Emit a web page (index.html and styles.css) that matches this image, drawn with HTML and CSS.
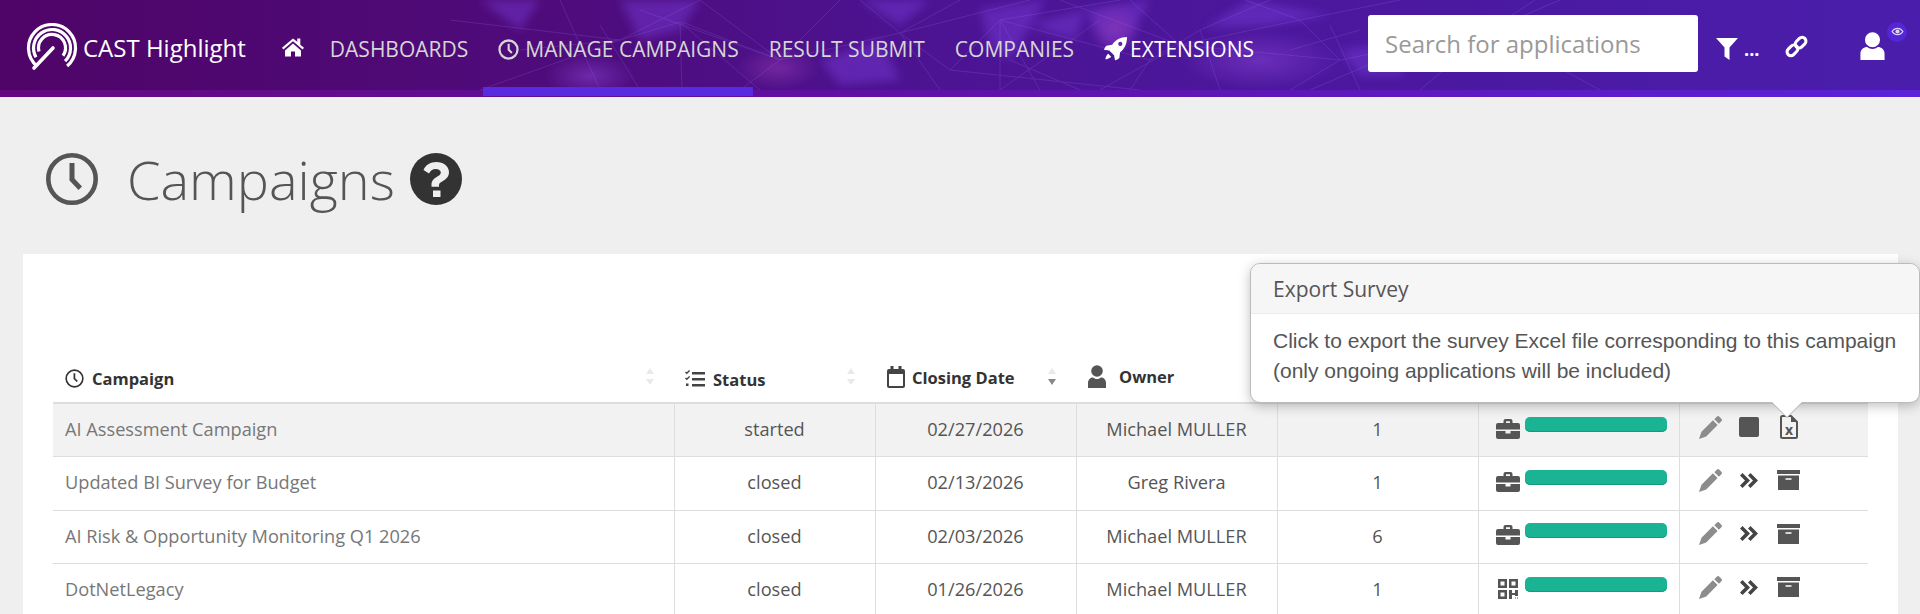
FILE: index.html
```html
<!DOCTYPE html>
<html lang="en">
<head>
<meta charset="utf-8">
<title>Campaigns</title>
<link rel="stylesheet" href="styles.css">
</head>
<body>
<svg class="defs" width="0" height="0" aria-hidden="true">
  <symbol id="case" viewBox="0 0 24 20"><path d="M7.500 4V2a2 2 0 0 1 2-2h5a2 2 0 0 1 2 2v2H22a2 2 0 0 1 2 2v4.500H0V6a2 2 0 0 1 2-2zm2.500 0h4V2.300h-4zM0 12h9.500v2.500h5V12H24v6a2 2 0 0 1-2 2H2a2 2 0 0 1-2-2z" fill="#555"/></symbol>
  <symbol id="qr" viewBox="0 0 24 20"><path fill="#555" fill-rule="evenodd" d="M2 0h9v9H2zM4.500 2.500v4h4v-4zM13 0h9v9h-9zM15.500 2.500v4h4v-4zM2 11h9v9H2zM4.500 13.500v4h4v-4zM13 11h3v3h3v-3h3v6h-3v-1h-3v4h-3zM19 18.500h1v1h-1zM21 18.500h1v1h-1z"/></symbol>
  <symbol id="pen" viewBox="0 0 24 24"><path fill="#8c8c8c" fill-rule="evenodd" d="M18.500.8a2 2 0 0 1 2.800 0l2 2a2 2 0 0 1 0 2.800l-2.500 2.500-4.800-4.800zM14.500 4.500l4.900 4.900L7.500 21.300 0 24l2.600-7.600z"/></symbol>
  <symbol id="next" viewBox="0 0 18 15"><path fill="#444" d="M0 2.500L2.500 0l7.500 7.500-7.500 7.500L0 12.500l5-5zM8 2.500L10.500 0 18 7.500 10.500 15 8 12.500l5-5z"/></symbol>
  <symbol id="box" viewBox="0 0 23 20"><path fill="#555" fill-rule="evenodd" d="M0 0h23v4H0zM1 5.500h21V20H1zM8.500 8.200v1.600h6V8.200z"/></symbol>
</svg>
<header class="topbar">
  <svg class="net" viewBox="0 0 1920 90" preserveAspectRatio="none" aria-hidden="true">
    <defs>
      <filter id="soft" x="-20%" y="-20%" width="140%" height="140%"><feGaussianBlur stdDeviation="5"/></filter>
      <radialGradient id="g1"><stop offset="0" stop-color="#8a45d8" stop-opacity=".5"/><stop offset="1" stop-color="#8a45d8" stop-opacity="0"/></radialGradient>
      <radialGradient id="g2"><stop offset="0" stop-color="#a040b8" stop-opacity=".45"/><stop offset="1" stop-color="#a040b8" stop-opacity="0"/></radialGradient>
    </defs>
    <g class="blobs" filter="url(#soft)">
      <polygon points="1085,10 1150,0 1125,45 1105,45"/>
      <polygon points="1205,28 1250,0 1330,15 1270,25"/>
      <polygon points="980,10 1045,0 1010,60 990,45"/>
      <polygon points="1340,50 1420,40 1400,75 1360,75"/>
      <polygon points="860,0 930,0 900,25"/>
      <polygon points="1030,25 1085,10 1075,40"/>
      <polygon points="620,0 700,0 680,30 640,40"/>
      <polygon points="480,0 540,0 520,30"/>
      <polygon points="820,60 880,40 900,80 840,85"/>
    </g>
    <ellipse cx="778" cy="68" rx="42" ry="22" fill="url(#g2)"/>
    <ellipse cx="590" cy="76" rx="45" ry="22" fill="url(#g1)"/>
    <ellipse cx="1115" cy="28" rx="28" ry="26" fill="url(#g2)"/>
    <ellipse cx="1260" cy="60" rx="80" ry="30" fill="url(#g1)"/>
    <g class="net-lines">
      <path d="M560 0L600 90M480 90L620 40L700 0M620 40L680 22L760 90M680 22L682 90M682 22L780 60M600 25L640 90"/>
      <path d="M780 60L900 33L1030 0M780 60L740 90M900 33L940 90M900 33L950 70L1000 20L1040 90M950 70L1140 90M640 10L780 60"/>
      <path d="M1000 20L1000 90M1000 20L1120 0M1000 20L1150 60L1200 30L1270 0M1150 60L1130 90M1200 30L1220 90M1000 90L1100 20"/>
      <path d="M1130 0L1180 45L1300 20L1340 60L1290 90M1300 20L1400 0M1340 60L1490 30M1490 30L1420 90M1490 30L1535 0"/>
      <path d="M1060 0L1180 45L1340 60M1245 0L1300 20M860 0L900 33L960 0M700 0L780 60L840 0M520 50L620 40M450 20L620 40"/>
      <path d="M1560 0L1490 30L1600 90M1310 90L1380 60L1490 30M1360 30L1290 50M1330 25L1360 90M1010 60L1080 90M1100 90L1180 45"/>
    </g>
  </svg>
  <a class="brand">
    <svg class="logo" viewBox="0 0 52 48" aria-hidden="true">
      <g fill="none" stroke="#fff" stroke-width="3.200">
        <path d="M10.900 43A23.500 23.500 0 1 1 41.100 43"/>
        <path d="M10 34.250A18.500 18.500 0 1 1 39.100 38.100"/>
        <path d="M13 28.500A13.500 13.500 0 1 1 37 32.700"/>
      </g>
      <path d="M8 45L27 25" stroke="#fff" stroke-width="3.600" stroke-linecap="round" fill="none"/>
    </svg>
    <span class="brand-name">CAST Highlight</span>
  </a>
  <nav class="menu">
    <a class="menu-home"><svg class="ic ic-home" viewBox="0 0 24 20"><path d="M12 1.500L1 10.800l1.400 1.600L12 4.300l9.600 8.100 1.400-1.600-3.700-3.100V1.500h-3v3.200zM4 13.500V19.500h6v-5h4v5h6v-6L12 6.500z"/></svg></a>
    <a class="menu-item">DASHBOARDS</a>
    <a class="menu-item menu-active"><svg class="ic ic-clock" viewBox="0 0 24 24"><circle cx="12" cy="12" r="10.300" fill="none" stroke="currentColor" stroke-width="2.600"/><path d="M11 5.500h2.400v6.300l3.300 3.300-1.700 1.700-4-4z" fill="currentColor"/></svg>MANAGE CAMPAIGNS</a>
    <a class="menu-item">RESULT SUBMIT</a>
    <a class="menu-item">COMPANIES</a>
    <a class="menu-item menu-ext"><svg class="ic ic-rocket" viewBox="0 0 24 25"><path fill-rule="evenodd" d="M24 0C17 0 12 3 8.500 8L2.500 9C2 9.200 0 12.500 0 13.200L5.500 14l5 5 1 5.500c.5.100 4.500-2 4.500-2.500l.8-6C21.500 12.500 24 7 24 0zM17 5a2.200 2.200 0 1 1 0 4.400A2.200 2.200 0 0 1 17 5z"/><path d="M4.500 17.500C2.500 18.500 1.500 22 1.500 23.200 3 23.200 6.500 22 7.500 20.500z"/></svg>EXTENSIONS</a>
  </nav>
  <div class="tools">
    <div class="search">Search for applications</div>
    <svg class="ic ic-filter" viewBox="0 0 22 22"><path d="M0 0h22l-8.500 9.500V22l-5-3.500V9.500z"/></svg>
    <span class="dots">...</span>
    <svg class="ic ic-link" viewBox="0 0 24 24"><g fill="none" stroke="#fff" stroke-width="3.200"><rect x="1.500" y="12" width="12.500" height="8" rx="4" transform="rotate(-45 7.750 16)"/><rect x="10" y="4" width="12.500" height="8" rx="4" transform="rotate(-45 16.250 8)"/></g></svg>
    <span class="user">
      <svg class="ic ic-user" viewBox="0 0 25 29"><circle cx="12.500" cy="8" r="7.800"/><path d="M0 29V22.500C0 18 3.500 15.500 7 15.500c1.500 1.200 3.500 2 5.500 2s4-.8 5.500-2c3.500 0 7 2.500 7 7V29z"/></svg>
      <span class="badge"><svg class="ic ic-eye" viewBox="0 0 24 16"><path d="M12 1C7 1 3 4 .8 8 3 12 7 15 12 15s9-3 11.200-7C21 4 17 1 12 1zm0 2.200c3.500 0 6.500 2 8.600 4.800-2.100 2.800-5.100 4.800-8.600 4.800S5.500 10.800 3.400 8C5.500 5.200 8.500 3.200 12 3.200z"/><circle cx="12" cy="8" r="3.800"/></svg></span>
    </span>
  </div>
</header>
<div class="stripe"><span class="stripe-active"></span></div>

<main class="page">
  <h1 class="page-title">
    <svg class="title-clock" viewBox="0 0 52 52"><circle cx="26" cy="26" r="23.700" fill="none" stroke="#555" stroke-width="4.600"/><path d="M23.500 10h5v15.500l7.500 8-3.500 3.400-9-9.500z" fill="#555"/></svg>
    <span class="title-text">Campaigns</span>
    <svg class="title-help" viewBox="0 0 52 52"><circle cx="26" cy="26" r="26" fill="#333"/><path d="M26.500 9c-6.500 0-11 3-13 8l5.500 3.500c1.200-2.700 3.500-4.500 6.800-4.500 2.700 0 5 1.300 5 3.500 0 2-1.500 3-3.800 4.300-3.200 1.800-5.500 4-5.500 8v2h7.500v-1.500c0-2 1.200-2.800 3.500-4.100 3.300-2 6.500-4.300 6.500-9C39 13 33 9 26.500 9zM23 37.500h7.500V44H23z" fill="#efefef"/></svg>
  </h1>
  <section class="card">
    <table class="grid">
      <colgroup><col class="c1"><col class="c2"><col class="c3"><col class="c4"><col class="c5"><col class="c6"><col class="c7"></colgroup>
      <thead>
        <tr>
          <th class="th-left"><span class="th-in"><svg class="th-ic ic-c" viewBox="0 0 20 20"><circle cx="10" cy="10" r="8.800" fill="none" stroke="#333" stroke-width="1.700"/><path d="M9 4.500h1.800v5.300l2.800 2.800-1.300 1.200L9 10.500z" fill="#333"/></svg><span>Campaign</span></span><span class="sort"><i class="up"></i><i class="down"></i></span></th>
          <th class="th-left"><span class="th-in"><svg class="th-ic ic-t" viewBox="0 0 20 18"><path d="M7 2h13v2.400H7zM7 8h13v2.400H7zM7 14h13v2.400H7z" fill="#444"/><path d="M.5 2l1.300 1.300L4.600.5M.5 8l1.300 1.300L4.600 6.500" fill="none" stroke="#444" stroke-width="1.400"/><rect x="1" y="13.500" width="2.500" height="2.500" fill="#444"/></svg><span>Status</span></span><span class="sort"><i class="up"></i><i class="down"></i></span></th>
          <th class="th-left"><span class="th-in"><svg class="th-ic ic-d" viewBox="0 0 18 22"><path fill-rule="evenodd" d="M2 3h14a2 2 0 0 1 2 2v15a2 2 0 0 1-2 2H2a2 2 0 0 1-2-2V5a2 2 0 0 1 2-2zm0 5v12h14V8z" fill="#444"/><path d="M3.500 0h3v5h-3zM11.500 0h3v5h-3z" fill="#444"/></svg><span>Closing Date</span></span><span class="sort"><i class="up"></i><i class="down on"></i></span></th>
          <th class="th-left"><span class="th-in th-owner"><svg class="th-ic ic-u" viewBox="0 0 18 23"><circle cx="9" cy="6" r="5.800" fill="#555"/><path d="M0 23v-5c0-3.500 2.500-5.500 5-5.500 1 .9 2.500 1.500 4 1.500s3-.6 4-1.500c2.500 0 5 2 5 5.500v5z" fill="#555"/></svg><span>Owner</span></span></th>
          <th></th><th></th><th></th>
        </tr>
      </thead>
      <tbody>
        <tr class="hl"><td class="name">AI Assessment Campaign</td><td>started</td><td>02/27/2026</td><td>Michael MULLER</td><td>1</td>
          <td class="tech"><div class="tech-in"><svg class="ic-case" viewBox="0 0 24 20"><use href="#case"/></svg><span class="bar"></span></div></td>
          <td class="acts"><div class="acts-in"><svg class="a-pen" viewBox="0 0 24 24"><use href="#pen"/></svg><svg class="a-stop" viewBox="0 0 20 20"><rect width="20" height="20" rx="2" fill="#555"/></svg><svg class="a-xls" viewBox="0 0 18 24"><path d="M2.500 1H11l6 6v14.500a1.500 1.500 0 0 1-1.500 1.500h-13A1.500 1.500 0 0 1 1 21.500V2.500A1.500 1.500 0 0 1 2.500 1z" fill="none" stroke="#555" stroke-width="2"/><path d="M11 1v6h6z" fill="#555"/><text x="9" y="20" class="xls-x">x</text></svg></div></td></tr>
        <tr><td class="name">Updated BI Survey for Budget</td><td>closed</td><td>02/13/2026</td><td>Greg Rivera</td><td>1</td>
          <td class="tech"><div class="tech-in"><svg class="ic-case" viewBox="0 0 24 20"><use href="#case"/></svg><span class="bar"></span></div></td>
          <td class="acts"><div class="acts-in"><svg class="a-pen" viewBox="0 0 24 24"><use href="#pen"/></svg><svg class="a-next" viewBox="0 0 18 15"><use href="#next"/></svg><svg class="a-box" viewBox="0 0 23 20"><use href="#box"/></svg></div></td></tr>
        <tr><td class="name">AI Risk &amp; Opportunity Monitoring Q1 2026</td><td>closed</td><td>02/03/2026</td><td>Michael MULLER</td><td>6</td>
          <td class="tech"><div class="tech-in"><svg class="ic-case" viewBox="0 0 24 20"><use href="#case"/></svg><span class="bar"></span></div></td>
          <td class="acts"><div class="acts-in"><svg class="a-pen" viewBox="0 0 24 24"><use href="#pen"/></svg><svg class="a-next" viewBox="0 0 18 15"><use href="#next"/></svg><svg class="a-box" viewBox="0 0 23 20"><use href="#box"/></svg></div></td></tr>
        <tr><td class="name">DotNetLegacy</td><td>closed</td><td>01/26/2026</td><td>Michael MULLER</td><td>1</td>
          <td class="tech"><div class="tech-in"><svg class="ic-case" viewBox="0 0 24 20"><use href="#qr"/></svg><span class="bar"></span></div></td>
          <td class="acts"><div class="acts-in"><svg class="a-pen" viewBox="0 0 24 24"><use href="#pen"/></svg><svg class="a-next" viewBox="0 0 18 15"><use href="#next"/></svg><svg class="a-box" viewBox="0 0 23 20"><use href="#box"/></svg></div></td></tr>
      </tbody>
    </table>
  </section>
  <aside class="pop">
    <div class="pop-head">Export Survey</div>
    <div class="pop-body">Click to export the survey Excel file corresponding to this campaign<br>(only ongoing applications will be included)</div>
    <span class="pop-arrow"></span>
  </aside>
</main>
</body>
</html>
```
FILE: styles.css
```css
* { box-sizing: border-box; }
html, body { margin: 0; height: 614px; overflow: hidden; }
body { background: #efefef; font-family: "Open Sans", sans-serif; color: #555; position: relative; }
a { color: inherit; text-decoration: none; }

.topbar { position: relative; height: 90px; display: flex; align-items: center; padding-left: 26px; overflow: hidden;
  background: linear-gradient(90deg, #4f0467 0%, #4e0c7c 30%, #4c1494 50%, #4a1eac 100%); }
.net { position: absolute; inset: 0; width: 100%; height: 100%; }
.blobs { fill: #7a3ddc; opacity: .45; }
.net-lines { fill: none; stroke: #9a6ce8; stroke-width: 1; opacity: .22; }
.brand { position: relative; display: flex; align-items: center; margin: 4px 35px 0 0; }
.logo { width: 52px; height: 48px; margin-right: 5px; }
.brand-name { font-size: 24px; color: #fff; white-space: nowrap; }
.menu { position: relative; display: flex; align-items: center; height: 100%; padding-top: 8px; font-size: 21px; color: #d6d6d6; }
.menu-home { width: 34px; display: flex; margin-top: -5px; }
.menu-item { display: flex; align-items: center; padding: 0 15px; white-space: nowrap; }
.menu-ext { color: #fff; }
.ic { fill: currentColor; }
.ic-home { width: 24px; height: 20px; color: #fff; }
.ic-clock { width: 21px; height: 21px; margin-right: 6px; }
.ic-rocket { width: 23px; height: 24px; margin-right: 3px; color: #fff; }
.tools { position: relative; margin-left: auto; display: flex; align-items: center; height: 100%; color: #fff; padding: 8px 13px 0 0; }
.search { width: 330px; height: 57px; background: #fff; border-radius: 3px; font-size: 24px; color: #999; padding-left: 17px; line-height: 58px; margin: 0 18px 12px 0; }
.ic-filter { width: 22px; height: 22px; }
.dots { width: 16px; margin-left: 6px; font-size: 18px; font-weight: 700; line-height: 1; }
.ic-link { width: 23px; height: 23px; margin: -5px 0 0 25px; }
.user { position: relative; margin: -7px 22px 0 52px; display: flex; }
.ic-user { width: 25px; height: 28px; }
.badge { position: absolute; left: 27px; top: -10px; width: 20px; height: 20px; border-radius: 50%; background: #5426d8; display: flex; align-items: center; justify-content: center; color: #dcd3f7; }
.ic-eye { width: 13px; height: 9px; }

.stripe { position: relative; height: 7px; background: linear-gradient(90deg, #64087f 0%, #5f12a8 50%, #5b22d8 100%); }
.stripe-active { position: absolute; left: 483px; top: -3px; width: 270px; height: 9px; background: #582ae0; }

.page { position: relative; height: 517px; overflow: hidden; padding: 0 22px 0 23px; }
.page-title { margin: 0; height: 157px; display: flex; align-items: flex-start; padding: 56px 0 0 23px; font-weight: 300; }
.title-clock { width: 52px; height: 52px; flex: none; }
.title-text { font-weight: 300; font-size: 54px; line-height: 52px; margin-left: 29px; color: #555; }
.title-help { width: 52px; height: 52px; flex: none; margin-left: 15px; }

.card { background: #fff; padding: 0 30px; height: 360px; overflow: hidden; }
.grid { border-collapse: collapse; table-layout: fixed; width: 1815px; }
.c1 { width: 621px; } .c2 { width: 201px; } .c3 { width: 201px; } .c4 { width: 201px; } .c5 { width: 201px; } .c6 { width: 201px; } .c7 { width: 189px; }
.grid thead th { height: 149px; vertical-align: bottom; padding: 0 0 9px; text-align: left; border-bottom: 2px solid #ddd; font-size: 16.5px; color: #333; font-weight: 700; position: relative; }
.th-in { display: inline-flex; align-items: center; padding-left: 12px; }
.th-ic { margin-right: 8px; flex: none; }
.ic-c { width: 19px; height: 19px; }
.ic-t { width: 20px; height: 18px; margin-left: -1px; }
.ic-d { width: 18px; height: 22px; margin-right: 7px; }
.ic-u { width: 18px; height: 23px; margin-right: 13px; }
.sort { position: absolute; right: 20px; bottom: 17px; width: 8px; display: flex; flex-direction: column; gap: 5px; }
.sort i { display: block; width: 0; height: 0; border-left: 4px solid transparent; border-right: 4px solid transparent; }
.sort .up { border-bottom: 6px solid #e9e9e9; }
.sort .down { border-top: 6px solid #e9e9e9; }
.sort .down.on { border-top-color: #888; }

.grid td { height: 53.5px; padding: 0 0 2px; font-size: 18.2px; color: #555; text-align: center; border-bottom: 1px solid #ddd; border-left: 1px solid #ddd; vertical-align: middle; }
.grid td.name { text-align: left; padding-left: 12px; color: #777; border-left: 0; }
.grid tr.hl td { background: #f2f2f2; }
.tech-in { display: flex; align-items: flex-start; padding: 0 0 3px 17px; gap: 5px; }
.ic-case { width: 24px; height: 20px; margin-top: 2px; flex: none; }
.bar { width: 142px; height: 15px; border-radius: 5px; background: #1ab394; box-shadow: inset 0 -1px 0 #149a7f; }
.acts-in { display: flex; align-items: center; padding: 0 0 4px 19px; }
.a-pen { width: 23px; height: 23px; flex: none; }
.a-stop { width: 20px; height: 20px; margin-left: 17px; flex: none; }
.a-xls { width: 18px; height: 24px; margin-left: 21px; flex: none; }
.xls-x { font-family: "Open Sans", sans-serif; font-size: 14px; font-weight: 700; fill: #555; text-anchor: middle; }
.a-next { width: 18px; height: 15px; margin-left: 18px; flex: none; }
.a-box { width: 23px; height: 20px; margin-left: 19px; flex: none; }
.defs { position: absolute; }

.pop { position: absolute; left: 1250px; top: 166px; width: 670px; height: 140px; background: #fff; border: 1px solid #bbb; border-radius: 10px; box-shadow: 0 3px 12px rgba(0,0,0,.25); }
.pop-head { height: 50px; background: #f6f6f6; border-bottom: 1px solid #ebebeb; border-radius: 10px 10px 0 0; font-size: 21px; line-height: 50px; padding-left: 22px; color: #555; }
.pop-body { font-family: "Liberation Sans", Arial, sans-serif; font-size: 21px; line-height: 30px; padding: 12px 0 0 22px; color: #555; white-space: nowrap; }
.pop-arrow { position: absolute; left: 521px; bottom: -15px; width: 0; height: 0; border-left: 15px solid transparent; border-right: 15px solid transparent; border-top: 15px solid #fff; filter: drop-shadow(0 1px 0 #aaa); }
```
